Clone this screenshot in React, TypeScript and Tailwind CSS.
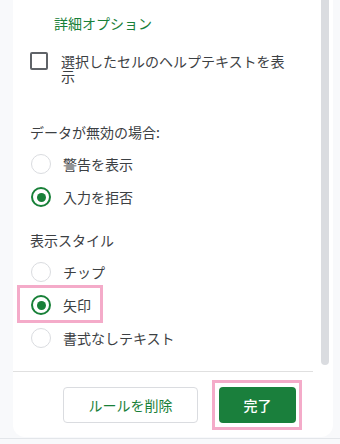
const font = { fontFamily: '"Noto Sans CJK JP", "Noto Sans", sans-serif' };

function Radio({ label, checked }: { label: string; checked?: boolean }) {
    return (
        <div className="flex items-center h-5">
            <span className={checked
                ? "w-5 h-5 rounded-full border-[2.5px] border-[#188038] flex items-center justify-center shrink-0 ml-[1px]"
                : "w-5 h-5 rounded-full border border-[#dadce0] shrink-0 ml-[1px]"}>
                {checked && <span className="w-[9px] h-[9px] rounded-full bg-[#188038]" />}
            </span>
            <span className="ml-3 text-[14px] leading-5 text-[#3c4043]">{label}</span>
        </div>
    )
}

export default function App() {
    return (
        <div className="relative w-[340px] h-[444px] bg-[#f8f9fb] overflow-hidden" style={font}>
            <div className="h-[439px] border-b border-[#e3e6ea]">
                <div className="ml-[13px] w-[320px] h-[437px] bg-white rounded-b-[12px] flex flex-col">
                    <div className="flex h-[371px]">
                        <div className="flex-1 pl-[17px] pt-[13px]">
                            <p className="pl-[24px] text-[14px] leading-5 text-[#188038]">詳細オプション</p>

                            <div className="flex mt-[19px]">
                                <span className="w-[18px] h-[18px] border-2 border-[#5f6368] rounded-[2px] shrink-0" />
                                <p className="ml-[13px] mt-[2px] w-[232px] text-[14px] leading-[15px] text-[#3c4043]">
                                    選択したセルのヘルプテキストを表示
                                </p>
                            </div>

                            <p className="mt-[38px] text-[14px] leading-5 text-[#3c4043]">データが無効の場合:</p>
                            <div className="flex flex-col gap-[13px] mt-[12px]">
                                <Radio label="警告を表示" />
                                <Radio label="入力を拒否" checked />
                            </div>

                            <p className="mt-[23px] text-[14px] leading-5 text-[#3c4043]">表示スタイル</p>
                            <div className="flex flex-col gap-[13px] mt-[12px]">
                                <Radio label="チップ" />
                                <Radio label="矢印" checked />
                                <Radio label="書式なしテキスト" />
                            </div>
                        </div>
                        <div className="w-2 h-[365px] bg-[#dadce0] rounded-b-full mr-1" />
                    </div>

                    <div className="w-[300px] h-px bg-[#e0e0e0]" />

                    <div className="flex justify-end gap-[21px] pt-[15px] pr-[37px]">
                        <button className="w-[135px] h-9 border border-[#dadce0] rounded-[4px] text-[14px] text-[#188038]">
                            ルールを削除
                        </button>
                        <button className="w-[77px] h-9 bg-[#1a7f3c] rounded-[4px] text-[14px] font-medium text-white">
                            完了
                        </button>
                    </div>
                </div>
            </div>

            <div className="absolute left-[17px] top-[285px] w-[86px] h-[38px] border-[3px] border-[#f4abc9]" />
            <div className="absolute left-[212px] top-[380px] w-[90px] h-[50px] border-[3px] border-[#f4abc9]" />
        </div>
    )
}
